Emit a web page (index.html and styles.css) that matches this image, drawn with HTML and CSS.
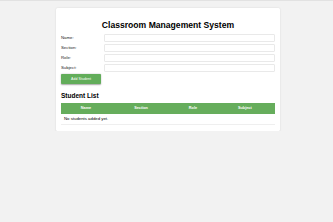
FILE: index.html
```html
<!DOCTYPE html>
<html lang="en">

<head>
    <meta charset="UTF-8">
    <meta name="viewport" content="width=device-width, initial-scale=1.0">
    <title>Classroom Management System</title>
    <link rel="stylesheet" href="styles.css">
</head>

<body>
    <div class="container">
        <h1>Classroom Management System</h1>
        <form class="student-form">
            <label for="name">Name:</label>
            <input type="text" id="name">
            <label for="section">Section:</label>
            <input type="text" id="section">
            <label for="role">Role:</label>
            <input type="text" id="role">
            <label for="subject">Subject:</label>
            <input type="text" id="subject">
            <button type="button" class="btn-add">Add Student</button>
        </form>

        <h2>Student List</h2>
        <table>
            <thead>
                <tr>
                    <th>Name</th>
                    <th>Section</th>
                    <th>Role</th>
                    <th>Subject</th>
                </tr>
            </thead>
            <tbody>
                <tr>
                    <td colspan="4" class="empty">No students added yet.</td>
                </tr>
            </tbody>
        </table>
    </div>
</body>

</html>
```

FILE: styles.css
```css
body {
    margin: 0;
    background-color: #f2f2f2;
    border-top: 1px solid #e2e2e2;
    font-family: "Liberation Sans", Arial, sans-serif;
    font-size: 4.3px;
    color: #000;
}

.container {
    width: 214px;
    margin: 7px 0 0 56px;
    padding: 12px 5px 6px;
    background-color: #ffffff;
    border-radius: 1.5px;
    box-shadow: 0 0.5px 2px rgba(0, 0, 0, 0.12);
}

h1 {
    margin: 0 0 3.5px;
    font-size: 8.6px;
    text-align: center;
}

.student-form {
    display: grid;
    grid-template-columns: 43px 1fr;
    row-gap: 2px;
    align-items: center;
}

.student-form label {
    color: #222;
}

.student-form input {
    box-sizing: border-box;
    height: 8px;
    margin: 0;
    padding: 0 2px;
    border: 1px solid #e9e9e9;
    border-radius: 1px;
    background-color: #fff;
    font-size: 4.3px;
}

.btn-add {
    grid-column: 1;
    width: 40px;
    height: 10px;
    padding: 0;
    border: none;
    border-radius: 1px;
    background-color: #62ad5a;
    color: #ffffff;
    font-family: "Liberation Sans", Arial, sans-serif;
    font-size: 3.6px;
    font-weight: normal;
    box-shadow: 0 0.5px 1.5px rgba(0, 0, 0, 0.35);
    cursor: pointer;
}

h2 {
    margin: 8px 0 4.5px;
    font-size: 6.5px;
}

table {
    width: 100%;
    border-collapse: collapse;
}

th {
    height: 10.5px;
    padding: 0 3px;
    background-color: #66ad5c;
    border: none;
    color: #ffffff;
    font-size: 3.8px;
    font-weight: bold;
}

td {
    height: 10.5px;
    padding: 0 3px;
    border-bottom: 1px solid #efefef;
}

.empty {
    text-align: left;
}
```
